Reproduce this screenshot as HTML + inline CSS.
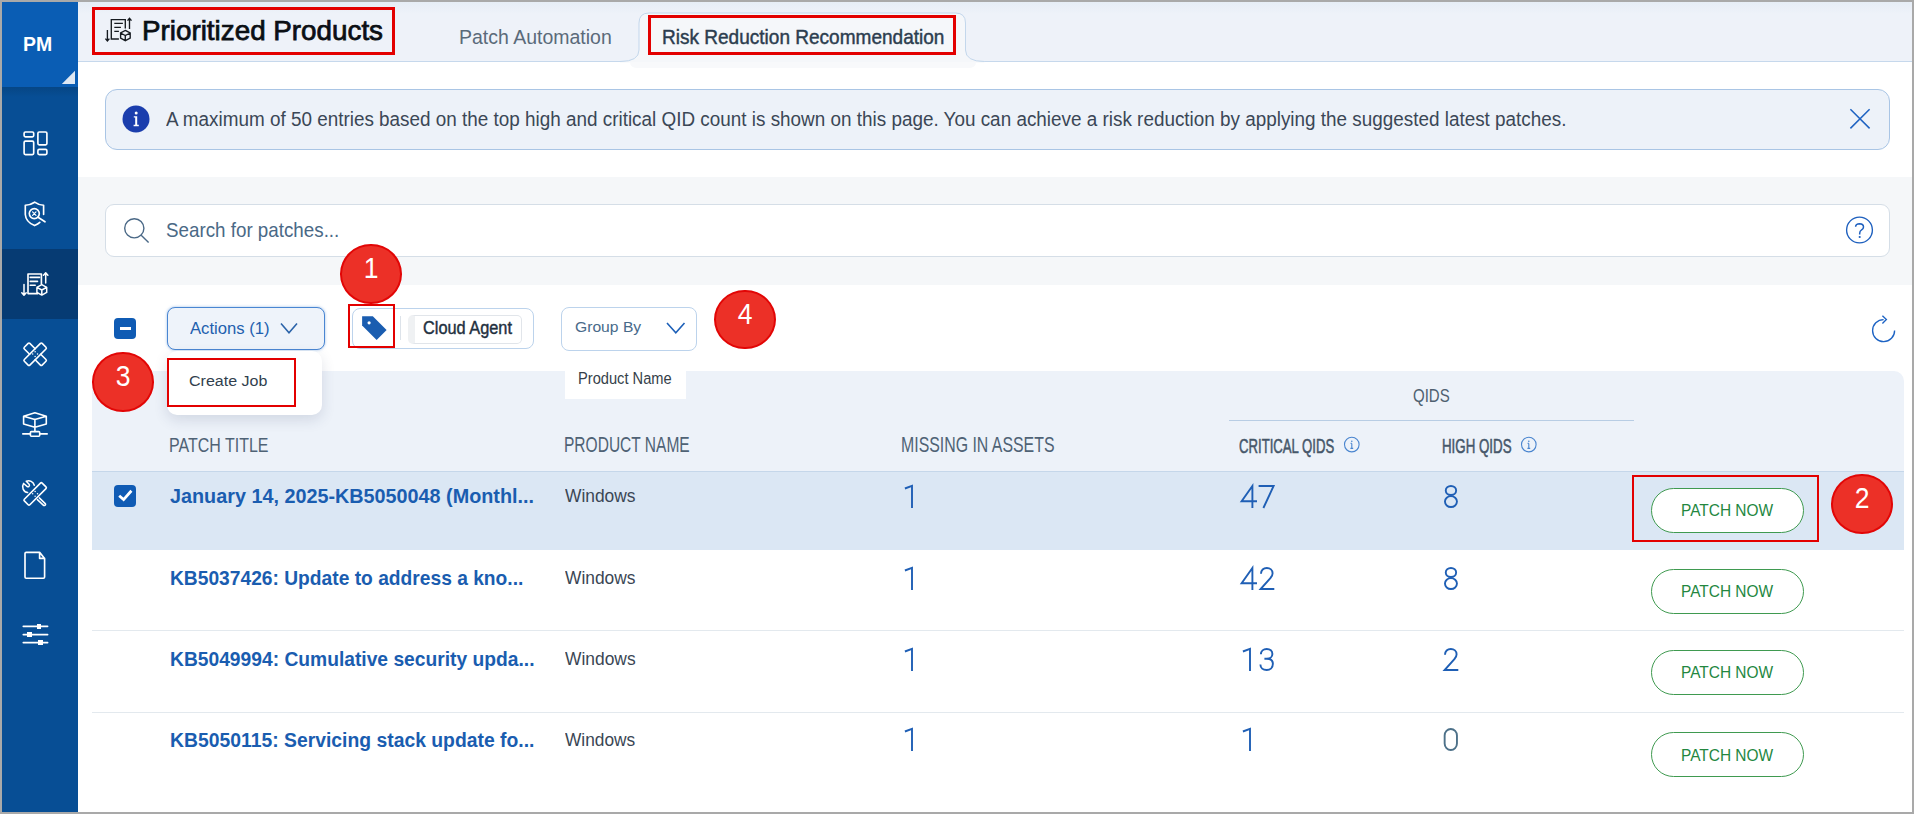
<!DOCTYPE html>
<html><head><meta charset="utf-8">
<style>
*{box-sizing:border-box;margin:0;padding:0}
html,body{width:1914px;height:814px;overflow:hidden}
body{background:#a9a9a9;font-family:"Liberation Sans",sans-serif;position:relative}
.a{position:absolute}
.t{position:absolute;white-space:nowrap;line-height:1}
#page{left:2px;top:2px;width:1910px;height:810px;background:#fff;overflow:hidden}
.rb{position:absolute;border:3px solid #e30000}
.badge{position:absolute;width:61.5px;height:59.7px;border-radius:50%;background:#ec3027;border:2.6px solid #e20606;color:#fff;font-size:29.5px;text-align:center;line-height:44px}
.badge span{display:inline-block;transform:scaleX(0.9)}
.tt{font-weight:bold;color:#1a5db2}
.num{font-size:31.5px;color:#2a5fae}
.pn{width:153px;height:45px;border:1.5px solid #3f9a50;border-radius:23px;background:#fff}
</style></head><body>
<div id="page" class="a"></div>
<!-- sidebar -->
<div class="a" style="left:2px;top:2px;width:76px;height:810px;background:#074e95"></div>
<div class="a" style="left:2px;top:2px;width:76px;height:85px;background:#0a5db4"></div>
<div class="a" style="left:2px;top:87px;width:76px;height:10px;background:linear-gradient(#064685,rgba(7,78,149,0))"></div>
<svg class="a" style="left:60px;top:69px" width="16" height="16"><polygon points="15,1.8 15,15 1.8,15" fill="#dfe8f3"/></svg>
<div class="a" style="left:2px;top:249px;width:76px;height:70px;background:#063b73"></div>


<svg class="a" style="left:0;top:0" width="80" height="700" fill="none" stroke="#fff" stroke-width="1.65" stroke-linejoin="round" stroke-linecap="round">
 <!-- dashboard -->
 <rect x="24.1" y="132" width="9.6" height="4.8" rx="1.3"/>
 <rect x="24.1" y="141.1" width="9.6" height="13.5" rx="1.3"/>
 <rect x="37.9" y="132" width="9" height="12.8" rx="1.3"/>
 <rect x="37.9" y="149.4" width="9" height="5.2" rx="1.3"/>
 <!-- shield search -->
 <path d="M43.6,214.5 V205.3 Q38.5,205 34.6,202.2 Q30.5,205 25.3,205.3 V214.5 Q25.8,222 34.6,225.6 Q38,224.2 39.8,222.4"/>
 <circle cx="34.3" cy="213.6" r="5"/>
 <path d="M38,217.3 L45,221.8"/>
 <path d="M32.6,211.9 L36,215.3 M36,211.9 L32.6,215.3" stroke-width="1.2"/>
 <!-- patch mgmt -->
 <path d="M37.8,293.6 H28 V274 H41.4 V284"/>
 <path d="M30.2,277.4 H39.5 M30.2,281.4 H37.5 M30.2,285.3 H35.2" stroke-width="1.6"/>
 <path d="M24,284.5 V295 M21.8,292.8 L24,295.3 L26.2,292.8" stroke-width="1.5"/>
 <path d="M45.7,283 V273 M43.5,275.2 L45.7,272.8 L47.9,275.2" stroke-width="1.5"/>
 <path d="M41.8,284.6 L46.7,287.3 V292.4 L41.8,295.1 L36.9,292.4 V287.3 Z M36.9,287.3 L41.8,290 L46.7,287.3 M41.8,290 V295" stroke-width="1.5"/>
 <!-- bandage -->
 <g transform="translate(35.15,354.25) rotate(-45)">
  <path d="M-3.9,-11.4 Q-3.9,-12.6 -2.7,-12.6 H2.7 Q3.9,-12.6 3.9,-11.4 V-3.9 M3.9,3.9 V11.4 Q3.9,12.6 2.7,12.6 H-2.7 Q-3.9,12.6 -3.9,11.4 V3.9 M-3.9,-3.9 V-11.4" stroke-width="1.6"/>
 </g>
 <g transform="translate(35.15,354.25) rotate(-45)">
  <rect x="-12.6" y="-3.9" width="25.2" height="7.8" rx="1.2" stroke-width="1.6"/>
 </g>
 <circle cx="35.1" cy="351.7" r="0.75" fill="#fff" stroke="none"/><circle cx="35.1" cy="356.5" r="0.75" fill="#fff" stroke="none"/><circle cx="32.7" cy="354.1" r="0.75" fill="#fff" stroke="none"/><circle cx="37.5" cy="354.1" r="0.75" fill="#fff" stroke="none"/>
 <!-- cube network -->
 <path d="M34.9,412.8 L46.3,416.3 V424 L34.9,427.2 L23.6,424 V416.3 Z M23.6,416.3 L34.9,419.4 L46.3,416.3 M34.9,419.4 V431.4" stroke-width="1.6"/>
 <rect x="30.4" y="431.6" width="9.3" height="4.6" rx="1" stroke-width="1.6"/>
 <path d="M22.8,433.9 H30.4 M39.7,433.9 H47.2" stroke-width="1.6"/>
 <!-- tools -->
 <g transform="translate(35.15,493.9) rotate(-45)">
  <rect x="-12.6" y="-3.9" width="25.2" height="7.8" rx="1.2" stroke-width="1.6"/>
 </g>
 <circle cx="35.1" cy="491.4" r="0.75" fill="#fff" stroke="none"/><circle cx="35.1" cy="496.2" r="0.75" fill="#fff" stroke="none"/><circle cx="32.7" cy="493.8" r="0.75" fill="#fff" stroke="none"/><circle cx="37.5" cy="493.8" r="0.75" fill="#fff" stroke="none"/>
 <path d="M39.3,497.9 L45,503.4 Q46.2,504.6 45,505.3 Q44,505.9 43,504.9 L37.4,499.6" stroke-width="1.5"/>
 <path d="M34.3,485.3 A5.9,5.9 0 0 0 26.2,481.3 M23.6,483.5 A5.9,5.9 0 0 0 27.6,492.6 M26.2,481.3 L29.1,484.3 Q29.9,485.4 29,486.3 Q28,487.1 27,486.3 L23.6,483.5" stroke-width="1.5"/>
 <!-- document -->
 <path d="M39.6,552.3 H26.2 Q25,552.3 25,553.5 V577 Q25,578.2 26.2,578.2 H43.4 Q44.6,578.2 44.6,577 V558.4 Z M39.6,552.3 V558.4 H44.6"/>
 <!-- sliders -->
 <path d="M23.3,626.3 H47.6 M23.3,634.6 H47.6 M23.3,642.6 H47.6" stroke-width="1.7"/>
</svg>
<div class="a" style="left:37px;top:624px;width:4.4px;height:4.8px;background:#fff"></div>
<div class="a" style="left:27.2px;top:632.2px;width:4.6px;height:4.8px;background:#fff"></div>
<div class="a" style="left:38px;top:640.2px;width:4.6px;height:4.8px;background:#fff"></div>

<!-- header -->
<div class="a" style="left:78px;top:2px;width:1834px;height:60px;background:linear-gradient(#e6edf6,#eef2f9 12px);border-bottom:1px solid #c6d8ec"></div>
<svg class="a" style="left:100px;top:10px" width="40" height="40" fill="none" stroke="#151a20" stroke-width="1.35" stroke-linecap="butt">
 <path d="M118.9,39 H111.3 V19.6 H125.3 V28.5" transform="translate(-100,-10)"/>
 <path d="M114.3,23.3 H122.9 M114.3,27.4 H120.9 M114.3,31.4 H118.9" transform="translate(-100,-10)"/>
 <path d="M107.4,30.1 V40.8 M105.4,38.6 L107.4,41 L109.4,38.6" transform="translate(-100,-10)"/>
 <path d="M129.5,28.9 V18.5 M127.5,20.6 L129.5,18.2 L131.5,20.6" transform="translate(-100,-10)"/>
 <path d="M125.3,30.4 L130.2,33 V38.2 L125.3,40.7 L120.6,38.2 V33 Z M120.6,33 L125.3,35.6 L130.2,33 M125.3,35.6 V40.7" transform="translate(-100,-10)"/>
</svg>
<div class="rb" style="left:92px;top:7px;width:303px;height:48px"></div>

<!-- active tab -->
<svg class="a" style="left:620px;top:10px" width="370" height="60">
 <path d="M0,51.5 Q19,51.5 19,40 V13 Q19,3 29,3 H335.5 Q345.5,3 345.5,13 V40 Q345.5,51.5 364.5,51.5 V52.5 H0 Z" fill="#f5f7fa"/>
 <path d="M10,52 H356 Q356,58 348,58 H18 Q10,58 10,52 Z" fill="#f8f9fb"/>
 <path d="M0,51.5 Q19,51.5 19,40 V13 Q19,3 29,3 H335.5 Q345.5,3 345.5,13 V40 Q345.5,51.5 364.5,51.5" fill="none" stroke="#c3d7ec" stroke-width="1"/>
</svg>
<div class="rb" style="left:648px;top:15px;width:308px;height:40px"></div>

<!-- banner -->
<div class="a" style="left:105px;top:89px;width:1785px;height:61px;background:#edf2f9;border:1px solid #a9c5e5;border-radius:12px"></div>
<svg class="a" style="left:120px;top:103px" width="32" height="32">
 <circle cx="16" cy="16" r="13.5" fill="#1b3ead"/>
 <circle cx="16.2" cy="9.9" r="1.5" fill="#fff"/>
 <path d="M13.8,13.2 H17.2 V21.8 H18.8 V23.2 H13.6 V21.8 H15.2 V14.6 H13.8 Z" fill="#fff"/>
</svg>
<svg class="a" style="left:1846px;top:105px" width="28" height="28"><path d="M4.4,4.2 L23.6,23.4 M23.6,4.2 L4.4,23.4" stroke="#1f63c2" stroke-width="1.5"/></svg>

<!-- search band -->
<div class="a" style="left:78px;top:177px;width:1834px;height:108px;background:#f5f7f9"></div>
<div class="a" style="left:105px;top:204px;width:1785px;height:53px;background:#fff;border:1px solid #d5dee7;border-radius:9px"></div>
<svg class="a" style="left:118px;top:212px" width="36" height="36" fill="none" stroke="#4a6886" stroke-width="1.4">
 <circle cx="16.3" cy="16.3" r="9.6"/><path d="M23.2,23.2 L30.6,30.6"/>
</svg>
<svg class="a" style="left:1843px;top:214px" width="34" height="34">
 <circle cx="16.5" cy="16" r="12.9" fill="none" stroke="#1d5fbe" stroke-width="1.35"/>
 <path d="M12.6,12.8 Q12.8,9.8 16.6,9.8 Q20.5,10 20.5,13 Q20.5,14.8 18.6,15.9 Q16.7,17 16.7,19.2 V20.4" fill="none" stroke="#1d5fbe" stroke-width="1.5"/>
 <circle cx="16.7" cy="23" r="1.1" fill="#1d5fbe"/>
</svg>

<!-- table header bg -->
<div class="a" style="left:92px;top:371px;width:1812px;height:100px;background:#edf2f9;border-top-right-radius:10px;border-top-left-radius:10px"></div>
<div class="a" style="left:92px;top:471px;width:1812px;height:1px;background:#c5d7ea"></div>
<div class="a" style="left:92px;top:472px;width:1812px;height:78px;background:#dbe7f4"></div>
<div class="a" style="left:92px;top:630px;width:1812px;height:1px;background:#e3e9ee"></div>
<div class="a" style="left:92px;top:712px;width:1812px;height:1px;background:#e3e9ee"></div>

<!-- toolbar -->
<div class="a" style="left:114px;top:318px;width:22px;height:21px;background:#0f5bb4;border-radius:4px"></div>
<div class="a" style="left:120px;top:327px;width:11px;height:3px;background:#fff"></div>
<div class="a" style="left:167px;top:307px;width:158px;height:43px;background:#eef3fa;border:1.5px solid #4a86d2;border-radius:8px;box-shadow:0 0 3px rgba(74,134,210,0.55)"></div>
<svg class="a" style="left:278px;top:320px" width="22" height="16"><path d="M3,3.6 L11,12.8 L19,3.6" fill="none" stroke="#2b63a9" stroke-width="1.6"/></svg>

<div class="a" style="left:167px;top:350.5px;width:155px;height:64.5px;background:#fff;border-radius:10px;box-shadow:0 5px 14px rgba(40,60,100,0.14)"></div>
<div class="rb" style="left:167px;top:358px;width:129px;height:49px;border-width:2.5px"></div>

<div class="a" style="left:352px;top:308px;width:182px;height:41px;background:#fff;border:1px solid #bcd3ec;border-radius:8px"></div>
<svg class="a" style="left:356px;top:310px" width="36" height="36"><path d="M6.1,6.2 H16.8 L30.6,20 L20.6,30 L6.1,15.4 Z" fill="#1a5db0"/><circle cx="13.1" cy="12.8" r="1.6" fill="#fff"/></svg>
<div class="a" style="left:400px;top:316px;width:1px;height:24px;background:#dde3ea"></div>
<div class="a" style="left:408px;top:315px;width:114px;height:29px;background:#fff;border:1px solid #e1e5ea;border-left:7px solid #eff1f3;border-radius:5px"></div>
<div class="rb" style="left:348px;top:304px;width:47px;height:44px;border-width:2.5px"></div>

<div class="a" style="left:561px;top:307px;width:136px;height:44px;background:#fff;border:1px solid #bcd3ec;border-radius:8px"></div>
<svg class="a" style="left:664px;top:320px" width="24" height="16"><path d="M3,3 L11.8,12.7 L20.5,3" fill="none" stroke="#1d60b8" stroke-width="1.6"/></svg>

<div class="a" style="left:565px;top:368px;width:121px;height:31px;background:#fff"></div>

<svg class="a" style="left:1868px;top:314px" width="32" height="32" fill="none" stroke="#1d63c4" stroke-width="1.35">
 <path d="M15.6,5.6 A11,11 0 1 0 26.6,16.4"/>
 <path d="M14.4,1.8 L18.4,5.6 L14.4,9.6"/>
</svg>

<!-- headers -->
<div class="a" style="left:1229px;top:420px;width:405px;height:1px;background:#b8cde4"></div>
<svg class="a" style="left:1340px;top:436px" width="24" height="20"><circle cx="11.8" cy="8.6" r="7.3" fill="none" stroke="#4a85cf" stroke-width="1.1"/><path d="M11.8,7.4 V12.4 M10.4,12.4 H13.2 M10.6,7.4 H11.8" stroke="#4a85cf" stroke-width="1.1" fill="none"/><circle cx="11.8" cy="5.2" r="0.8" fill="#4a85cf"/></svg>
<svg class="a" style="left:1517px;top:436px" width="24" height="20"><circle cx="11.8" cy="8.6" r="7.3" fill="none" stroke="#4a85cf" stroke-width="1.1"/><path d="M11.8,7.4 V12.4 M10.4,12.4 H13.2 M10.6,7.4 H11.8" stroke="#4a85cf" stroke-width="1.1" fill="none"/><circle cx="11.8" cy="5.2" r="0.8" fill="#4a85cf"/></svg>


<!-- rows -->
<div class="a" style="left:114px;top:485px;width:22px;height:22px;background:#0f5bb4;border-radius:4px"></div>
<svg class="a" style="left:114px;top:485px" width="22" height="22"><path d="M5.2,10.8 L9.6,14.6 L17.4,5.8" fill="none" stroke="#fff" stroke-width="2.8"/></svg>
<div class="a pn" style="left:1651px;top:488px"></div>
<div class="a pn" style="left:1651px;top:569px"></div>
<div class="a pn" style="left:1651px;top:650px"></div>
<div class="a pn" style="left:1651px;top:732.3px"></div>
<div class="rb" style="left:1632px;top:475px;width:187px;height:67px;border-width:2.5px"></div>
<div class="t" style="left:23.02px;top:34.75px;font-size:19.86px;font-weight:bold;color:#fff;transform:scaleX(0.9786);transform-origin:0 0;">PM</div>
<div class="t" style="left:141.68px;top:16.50px;font-size:27.54px;font-weight:normal;color:#0b0f14;-webkit-text-stroke:0.75px #0b0f14;transform:scaleX(1.0097);transform-origin:0 0;">Prioritized Products</div>
<div class="t" style="left:458.74px;top:28.15px;font-size:19.86px;font-weight:normal;color:#5a6a7a;transform:scaleX(0.9816);transform-origin:0 0;">Patch Automation</div>
<div class="t" style="left:661.57px;top:27.25px;font-size:20.43px;font-weight:normal;color:#2c3d4f;-webkit-text-stroke:0.45px #2c3d4f;transform:scaleX(0.9319);transform-origin:0 0;">Risk Reduction Recommendation</div>
<div class="t" style="left:166.00px;top:109.00px;font-size:20.00px;font-weight:normal;color:#3b4756;transform:scaleX(0.9443);transform-origin:0 0;">A maximum of 50 entries based on the top high and critical QID count is shown on this page. You can achieve a risk reduction by applying the suggested latest patches.</div>
<div class="t" style="left:166.43px;top:221.10px;font-size:19.42px;font-weight:normal;color:#4a6986;transform:scaleX(0.9678);transform-origin:0 0;">Search for patches...</div>
<div class="t" style="left:190.00px;top:321.30px;font-size:15.94px;font-weight:normal;color:#2260ae;transform:scaleX(1.0453);transform-origin:0 0;">Actions (1)</div>
<div class="t" style="left:188.67px;top:373.35px;font-size:15.51px;font-weight:normal;color:#313f4e;transform:scaleX(1.0338);transform-origin:0 0;">Create Job</div>
<div class="t" style="left:422.97px;top:320.45px;font-size:17.54px;font-weight:normal;color:#1f3040;-webkit-text-stroke:0.4px #1f3040;transform:scaleX(0.9316);transform-origin:0 0;">Cloud Agent</div>
<div class="t" style="left:575.29px;top:319.35px;font-size:15.51px;font-weight:normal;color:#486a8a;transform:scaleX(1.0109);transform-origin:0 0;">Group By</div>
<div class="t" style="left:577.59px;top:369.85px;font-size:16.09px;font-weight:normal;color:#363f4a;transform:scaleX(0.9119);transform-origin:0 0;">Product Name</div>
<div class="t" style="left:1412.82px;top:385.55px;font-size:19.28px;font-weight:normal;color:#4e6070;transform:scaleX(0.7800);transform-origin:0 0;">QIDS</div>
<div class="t" style="left:169.25px;top:434.80px;font-size:20.58px;font-weight:normal;color:#4f6275;transform:scaleX(0.7768);transform-origin:0 0;">PATCH TITLE</div>
<div class="t" style="left:563.54px;top:435.45px;font-size:21.30px;font-weight:normal;color:#4f6275;transform:scaleX(0.7294);transform-origin:0 0;">PRODUCT NAME</div>
<div class="t" style="left:901.21px;top:435.45px;font-size:21.30px;font-weight:normal;color:#4f6275;transform:scaleX(0.7453);transform-origin:0 0;">MISSING IN ASSETS</div>
<div class="t" style="left:1239.34px;top:435.80px;font-size:20.00px;font-weight:normal;color:#46576a;-webkit-text-stroke:0.55px #46576a;transform:scaleX(0.6573);transform-origin:0 0;">CRITICAL QIDS</div>
<div class="t" style="left:1441.73px;top:435.80px;font-size:20.00px;font-weight:normal;color:#46576a;-webkit-text-stroke:0.55px #46576a;transform:scaleX(0.6660);transform-origin:0 0;">HIGH QIDS</div>
<div class="t" style="left:170.40px;top:485.85px;font-size:20.14px;font-weight:bold;color:#1a5db0;transform:scaleX(0.9832);transform-origin:0 0;">January 14, 2025-KB5050048 (Monthl...</div>
<div class="t" style="left:565.30px;top:486.85px;font-size:18.12px;font-weight:normal;color:#3a4654;transform:scaleX(0.9603);transform-origin:0 0;">Windows</div>
<div class="t" style="left:1681.21px;top:503.30px;font-size:15.65px;font-weight:normal;color:#23873f;transform:scaleX(0.9880);transform-origin:0 0;">PATCH NOW</div>
<div class="t" style="left:170.06px;top:567.85px;font-size:20.43px;font-weight:bold;color:#1a5db0;transform:scaleX(0.9405);transform-origin:0 0;">KB5037426: Update to address a kno...</div>
<div class="t" style="left:565.30px;top:569.00px;font-size:18.84px;font-weight:normal;color:#3a4654;transform:scaleX(0.9224);transform-origin:0 0;">Windows</div>
<div class="t" style="left:1681.21px;top:584.30px;font-size:15.65px;font-weight:normal;color:#23873f;transform:scaleX(0.9880);transform-origin:0 0;">PATCH NOW</div>
<div class="t" style="left:169.63px;top:650.35px;font-size:19.86px;font-weight:bold;color:#1a5db0;transform:scaleX(0.9684);transform-origin:0 0;">KB5049994: Cumulative security upda...</div>
<div class="t" style="left:565.30px;top:649.10px;font-size:19.13px;font-weight:normal;color:#3a4654;transform:scaleX(0.9104);transform-origin:0 0;">Windows</div>
<div class="t" style="left:1681.21px;top:665.30px;font-size:15.65px;font-weight:normal;color:#23873f;transform:scaleX(0.9880);transform-origin:0 0;">PATCH NOW</div>
<div class="t" style="left:169.63px;top:730.00px;font-size:20.00px;font-weight:bold;color:#1a5db0;transform:scaleX(0.9672);transform-origin:0 0;">KB5050115: Servicing stack update fo...</div>
<div class="t" style="left:565.30px;top:729.85px;font-size:19.28px;font-weight:normal;color:#3a4654;transform:scaleX(0.8987);transform-origin:0 0;">Windows</div>
<div class="t" style="left:1681.21px;top:747.60px;font-size:15.65px;font-weight:normal;color:#23873f;transform:scaleX(0.9880);transform-origin:0 0;">PATCH NOW</div>
<svg class="a" style="left:902.00px;top:484.80px;overflow:visible" width="19" height="24" fill="none" stroke="#1f5fb5" stroke-width="1.9"><path d="M2.9,3.5 L10,0.9 V23"/></svg>
<svg class="a" style="left:1239.50px;top:484.80px;overflow:visible" width="19" height="24" fill="none" stroke="#1f5fb5" stroke-width="1.9"><path d="M12.4,23 V0.9 L1.6,16.2 H17"/></svg>
<svg class="a" style="left:1257.80px;top:484.80px;overflow:visible" width="19" height="24" fill="none" stroke="#1f5fb5" stroke-width="1.9"><path d="M0.6,1 H15.6 L5.4,23"/></svg>
<svg class="a" style="left:1442.00px;top:484.80px;overflow:visible" width="19" height="24" fill="none" stroke="#1f5fb5" stroke-width="1.9"><ellipse cx="8.95" cy="5.5" rx="5.2" ry="4.55"/><ellipse cx="8.95" cy="16.6" rx="6" ry="5.45"/></svg>
<svg class="a" style="left:902.00px;top:566.60px;overflow:visible" width="19" height="24" fill="none" stroke="#1f5fb5" stroke-width="1.9"><path d="M2.9,3.5 L10,0.9 V23"/></svg>
<svg class="a" style="left:1239.50px;top:566.60px;overflow:visible" width="19" height="24" fill="none" stroke="#1f5fb5" stroke-width="1.9"><path d="M12.4,23 V0.9 L1.6,16.2 H17"/></svg>
<svg class="a" style="left:1257.80px;top:566.60px;overflow:visible" width="19" height="24" fill="none" stroke="#1f5fb5" stroke-width="1.9"><path d="M3,6.8 C3,3.2 5.5,0.95 8.8,0.95 C12.1,0.95 14.6,3.2 14.6,6.3 C14.6,8.2 13.8,9.6 12.4,11.2 L2.6,22.05 H16.3"/></svg>
<svg class="a" style="left:1442.00px;top:566.60px;overflow:visible" width="19" height="24" fill="none" stroke="#1f5fb5" stroke-width="1.9"><ellipse cx="8.95" cy="5.5" rx="5.2" ry="4.55"/><ellipse cx="8.95" cy="16.6" rx="6" ry="5.45"/></svg>
<svg class="a" style="left:902.00px;top:647.90px;overflow:visible" width="19" height="24" fill="none" stroke="#1f5fb5" stroke-width="1.9"><path d="M2.9,3.5 L10,0.9 V23"/></svg>
<svg class="a" style="left:1239.50px;top:647.90px;overflow:visible" width="19" height="24" fill="none" stroke="#1f5fb5" stroke-width="1.9"><path d="M2.9,3.5 L10,0.9 V23"/></svg>
<svg class="a" style="left:1257.80px;top:647.90px;overflow:visible" width="19" height="24" fill="none" stroke="#1f5fb5" stroke-width="1.9"><path d="M2.9,6.3 C2.9,3.1 5.4,0.95 8.7,0.95 C12.1,0.95 14.4,3 14.4,5.9 C14.4,8.7 12.2,10.7 8.8,10.7 H6.4 M8.8,10.7 C12.6,10.7 14.9,12.7 14.9,15.8 C14.9,19.5 12.2,22.05 8.7,22.05 C5,22.05 2.4,19.9 2.4,16.6"/></svg>
<svg class="a" style="left:1442.00px;top:647.90px;overflow:visible" width="19" height="24" fill="none" stroke="#1f5fb5" stroke-width="1.9"><path d="M3,6.8 C3,3.2 5.5,0.95 8.8,0.95 C12.1,0.95 14.6,3.2 14.6,6.3 C14.6,8.2 13.8,9.6 12.4,11.2 L2.6,22.05 H16.3"/></svg>
<svg class="a" style="left:902.00px;top:727.90px;overflow:visible" width="19" height="24" fill="none" stroke="#1f5fb5" stroke-width="1.9"><path d="M2.9,3.5 L10,0.9 V23"/></svg>
<svg class="a" style="left:1239.50px;top:727.90px;overflow:visible" width="19" height="24" fill="none" stroke="#1f5fb5" stroke-width="1.9"><path d="M2.9,3.5 L10,0.9 V23"/></svg>
<svg class="a" style="left:1442.00px;top:727.90px;overflow:visible" width="19" height="24" fill="none" stroke="#4d7189" stroke-width="1.9"><rect x="2.65" y="0.95" width="12.3" height="21.1" rx="6.15" ry="6.6"/></svg>
<!-- badges -->
<div class="badge" style="left:340.3px;top:244px"><span>1</span></div>
<div class="badge" style="left:1831.3px;top:474px"><span>2</span></div>
<div class="badge" style="left:92.1px;top:352.1px"><span>3</span></div>
<div class="badge" style="left:714.4px;top:289.8px"><span>4</span></div>

</body></html>
